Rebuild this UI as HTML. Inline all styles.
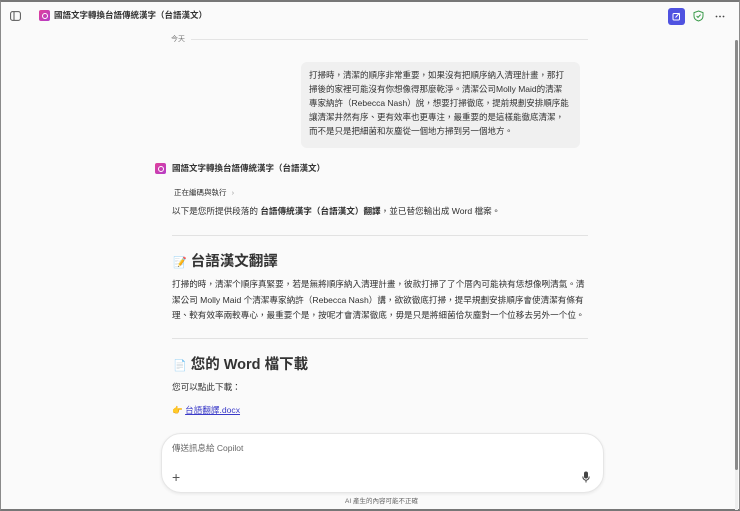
<!DOCTYPE html>
<html><head><meta charset="utf-8"><style>
*{margin:0;padding:0;box-sizing:border-box}
body{width:740px;height:511px;overflow:hidden;background:#fafafa;font-family:"Liberation Sans","Noto Sans CJK TC",sans-serif;color:#242424;position:relative}
.frame{position:absolute;inset:0;border:1px solid #8a8a8a;border-top:2px solid #777;border-bottom:2px solid #777}
.abs{position:absolute}
.t{font-size:8.5px;line-height:14px;white-space:nowrap}
.p{font-size:8.6px;line-height:15.6px;color:#303030;white-space:nowrap}
</style></head><body>
<div class="frame"></div>
<svg class="abs" style="left:10px;top:11px" width="11" height="10" viewBox="0 0 11 10"><rect x="0.6" y="0.6" width="9.8" height="8.8" rx="2" fill="none" stroke="#555" stroke-width="1"/><line x1="4" y1="1" x2="4" y2="9" stroke="#555"/></svg>
<div class="abs" style="left:39px;top:10px;width:11px;height:11px;border-radius:2px;background:linear-gradient(135deg,#e0409a,#b43cc8)"><div style="position:absolute;left:2.5px;top:2.5px;width:6px;height:6px;border:1px solid #fff;border-radius:50%"></div></div>
<div class="abs" style="left:54px;top:9px;font-size:8.5px;line-height:13px;font-weight:bold;color:#333">國語文字轉換台語傳統漢字（台語漢文）</div>
<div class="abs" style="left:668px;top:8px;width:17px;height:17px;border-radius:3px;background:#4f52e0"><svg width="17" height="17" viewBox="0 0 17 17"><rect x="5" y="5.5" width="6.5" height="6.5" rx="1" fill="none" stroke="#fff" stroke-width="1"/><line x1="7.5" y1="9.5" x2="11.5" y2="5" stroke="#fff" stroke-width="1"/></svg></div>
<svg class="abs" style="left:693px;top:10px" width="11" height="12" viewBox="0 0 11 12"><path d="M5.5 1 L10 2.6 V6 C10 8.6 8 10.3 5.5 11 C3 10.3 1 8.6 1 6 V2.6 Z" fill="none" stroke="#3a9a4a" stroke-width="1"/><path d="M3.6 6 L5 7.4 L7.6 4.6" fill="none" stroke="#3a9a4a" stroke-width="1"/></svg>
<svg class="abs" style="left:715px;top:15px" width="10" height="3" viewBox="0 0 10 3"><circle cx="1.5" cy="1.5" r="0.9" fill="#444"/><circle cx="5" cy="1.5" r="0.9" fill="#444"/><circle cx="8.5" cy="1.5" r="0.9" fill="#444"/></svg>
<div class="abs" style="left:735px;top:40px;width:3px;height:470px;background:#eee"></div>
<div class="abs" style="left:735px;top:40px;width:3px;height:430px;background:#8a8a8a;border-radius:2px"></div>
<div class="abs" style="left:171px;top:34px;font-size:7px;color:#777">今天</div>
<div class="abs" style="left:191px;top:39px;width:397px;height:1px;background:#e4e4e4"></div>
<div class="abs t" style="left:301px;top:62px;width:279px;height:86px;background:#f0f0f0;border-radius:6px;padding:6px 8px;color:#333">打掃時，清潔的順序非常重要，如果沒有把順序納入清理計畫，那打<br>掃後的家裡可能沒有你想像得那麼乾淨。清潔公司Molly Maid的清潔<br>專家納許（Rebecca Nash）說，想要打掃徹底，提前規劃安排順序能<br>讓清潔井然有序、更有效率也更專注，最重要的是這樣能徹底清潔，<br>而不是只是把細菌和灰塵從一個地方掃到另一個地方。</div>
<div class="abs" style="left:155px;top:163px;width:11px;height:11px;border-radius:2px;background:linear-gradient(135deg,#e0409a,#b43cc8)"><div style="position:absolute;left:2.5px;top:2.5px;width:6px;height:6px;border:1px solid #fff;border-radius:50%"></div></div>
<div class="abs" style="left:172px;top:162px;font-size:8.5px;line-height:13px;font-weight:bold;color:#333">國語文字轉換台語傳統漢字（台語漢文）</div>
<div class="abs" style="left:174px;top:187px;font-size:7.5px;line-height:12px;color:#333">正在編碼與執行 <span style="color:#999;margin-left:3px">›</span></div>
<div class="abs p" style="left:172px;top:204px">以下是您所提供段落的 <b>台語傳統漢字（台語漢文）翻譯</b>，並已替您輸出成 Word 檔案。</div>
<div class="abs" style="left:172px;top:235px;width:416px;height:1px;background:#e2e2e2"></div>
<div class="abs" style="left:173px;top:253px;font-size:14.5px;line-height:19px;font-weight:bold;color:#333"><span style="font-size:11px;color:#d0603a">📝</span> 台語漢文翻譯</div>
<div class="abs p" style="left:172px;top:277px;width:418px">打掃的時，清潔个順序真緊要，若是無將順序納入清理計畫，彼款打掃了了个厝內可能袂有恁想像咧清氣。清<br>潔公司 Molly Maid 个清潔專家納許（Rebecca Nash）講，欲欲徹底打掃，提早規劃安排順序會使清潔有條有<br>理、較有效率兩較專心，最重要个是，按呢才會清潔徹底，毋是只是將細菌佮灰塵對一个位移去另外一个位。</div>
<div class="abs" style="left:172px;top:338px;width:416px;height:1px;background:#e2e2e2"></div>
<div class="abs" style="left:173px;top:356px;font-size:14.5px;line-height:19px;font-weight:bold;color:#333"><span style="font-size:11px;color:#aaa">📄</span> 您的 Word 檔下載</div>
<div class="abs p" style="left:172px;top:380px">您可以點此下載：</div>
<div class="abs p" style="left:172px;top:403px"><span style="color:#e8a030">👉</span> <span style="color:#3b3bc8;text-decoration:underline">台語翻譯.docx</span></div>
<div class="abs" style="left:161px;top:433px;width:443px;height:60px;background:#fff;border:1px solid #e6e6e6;border-radius:20px;box-shadow:0 1px 3px rgba(0,0,0,.08)"></div>
<div class="abs" style="left:172px;top:442px;font-size:8.5px;line-height:13px;color:#666">傳送訊息給 Copilot</div>
<div class="abs" style="left:172px;top:470px;font-size:14px;line-height:14px;color:#555;font-weight:300">+</div>
<svg class="abs" style="left:582px;top:471px" width="8" height="12" viewBox="0 0 8 12"><rect x="2" y="0.5" width="4" height="7" rx="2" fill="#444"/><path d="M0.8 5.5 C0.8 8 2.5 9.2 4 9.2 C5.5 9.2 7.2 8 7.2 5.5" fill="none" stroke="#444" stroke-width="1"/><line x1="4" y1="9" x2="4" y2="11.5" stroke="#444"/></svg>
<div class="abs" style="left:345px;top:497px;font-size:6.5px;line-height:10px;color:#666">AI 產生的內容可能不正確</div>
</body></html>
